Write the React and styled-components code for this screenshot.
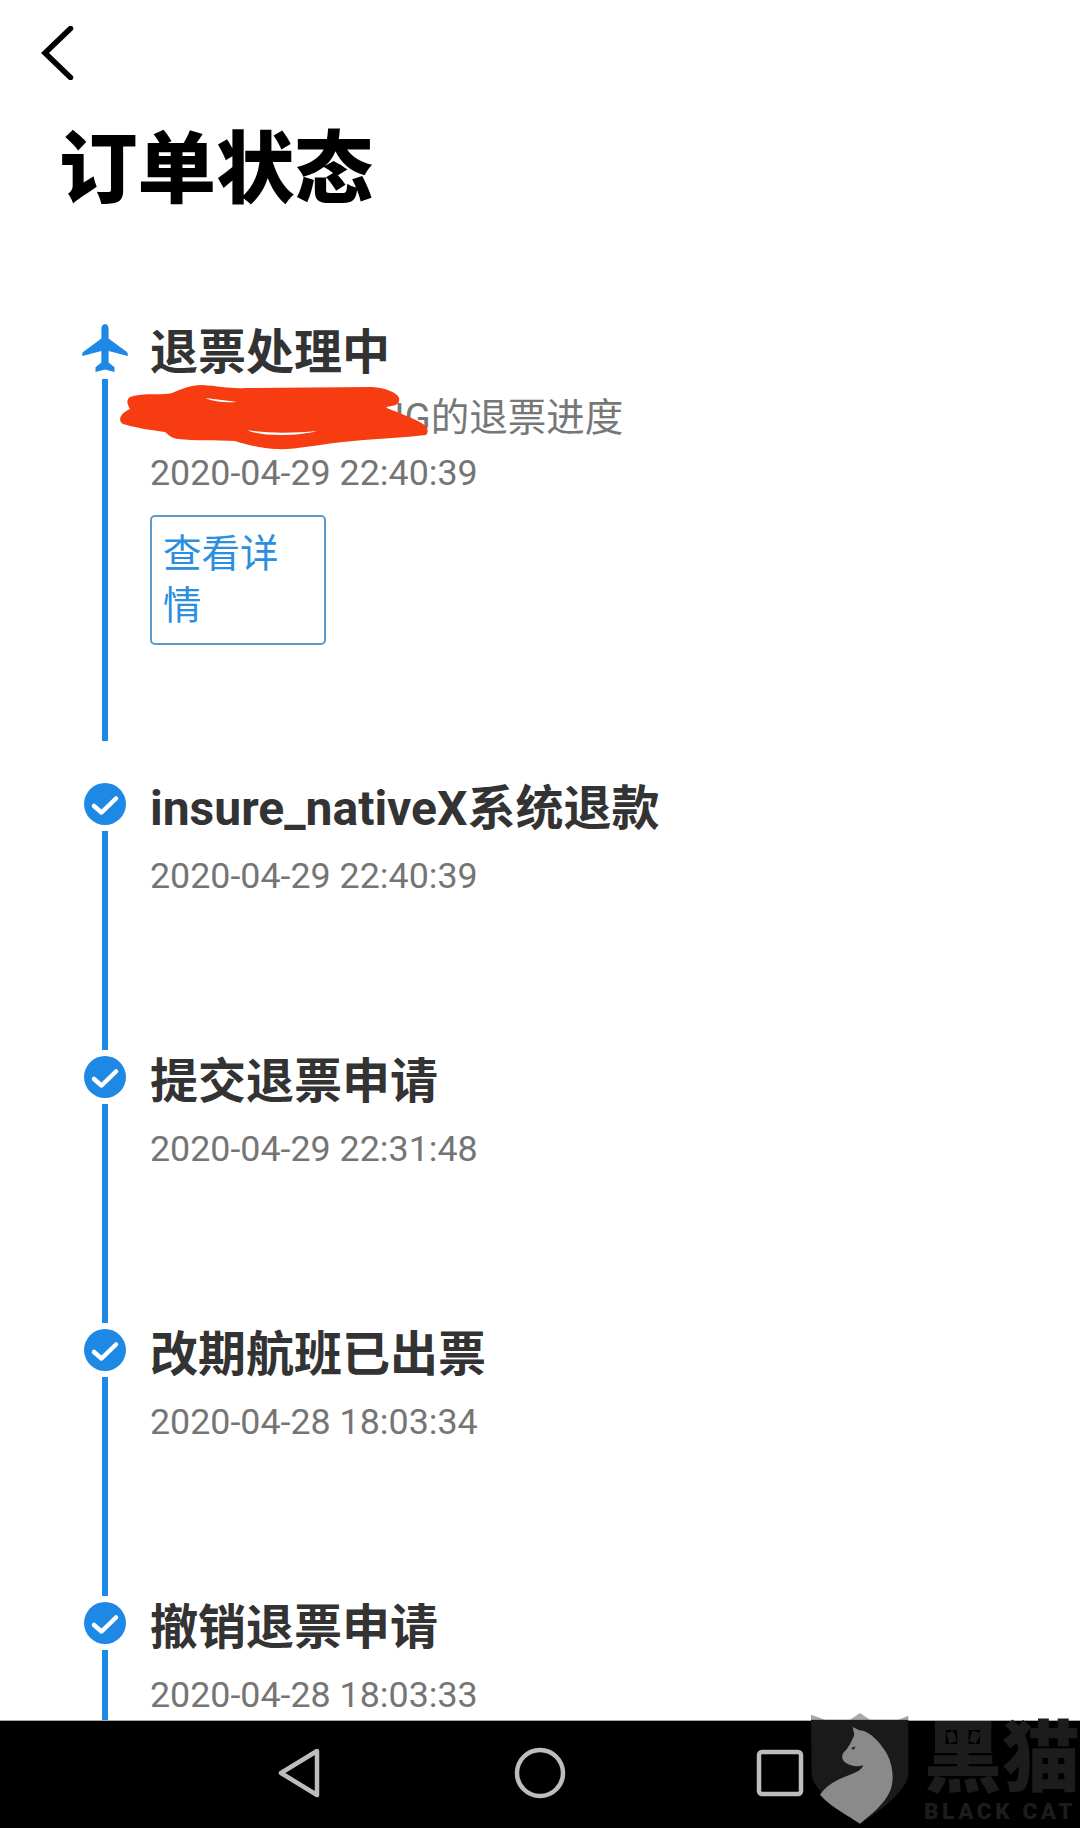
import React from "react";
import styled, { createGlobalStyle } from "styled-components";

const GlobalStyle = createGlobalStyle`
  html, body {
    margin: 0;
    background: #fff;
  }
  * {
    box-sizing: border-box;
  }
`;

const Page = styled.div`
  display: flex;
  flex-direction: column;
  width: 1080px;
  height: 1828px;
  overflow: hidden;
  font-family: Roboto, "Noto Sans CJK SC", sans-serif;
`;

const Content = styled.div`
  flex: 1;
  min-height: 0;
  overflow: hidden;
  padding-top: 26px;
`;

const BackIcon = styled.svg`
  display: block;
  width: 34px;
  height: 54px;
  margin-left: 41px;
`;

const Title = styled.h1`
  margin: 38px 0 0 59px;
  font-size: 78.5px;
  line-height: 104px;
  font-weight: 900;
  color: #000;
`;

const Timeline = styled.div`
  margin-top: 102px;
  padding-left: 75px;
`;

const Item = styled.div`
  display: flex;
  gap: 15px;
  height: ${(p) => p.$height}px;
`;

const Rail = styled.div`
  display: flex;
  flex-direction: column;
  align-items: center;
  flex: none;
  width: 60px;
  padding-bottom: ${(p) => p.$gap}px;
`;

const Line = styled.div`
  flex: 1;
  width: 6px;
  margin-top: 6px;
  background: #1e88e5;
`;

const Plane = styled.svg`
  display: block;
  flex: none;
  width: 46px;
  height: 49px;
`;

const Check = styled.svg`
  display: block;
  flex: none;
  width: 42px;
  height: 42px;
`;

const Body = styled.div`
  flex: 1;
  min-width: 0;
`;

const Heading = styled.div`
  margin-top: ${(p) => p.$top}px;
  font-size: 48px;
  line-height: 54px;
  font-weight: 700;
  color: #333;
`;

const NoteRow = styled.div`
  position: relative;
  height: 54px;
  margin-top: 11px;
  padding-left: 227px;
  font-size: 38.5px;
  line-height: 54px;
  color: #777;
`;

const Scribble = styled.svg`
  position: absolute;
  left: -40px;
  top: -17px;
  width: 340px;
  height: 85px;
`;

const Time = styled.div`
  margin-top: ${(p) => p.$top}px;
  font-size: 35.8px;
  line-height: 42px;
  color: #757575;
`;

const DetailButton = styled.div`
  width: 176px;
  height: 130px;
  margin-top: 21px;
  padding: 11px 11px;
  border: 2px solid #5b9bc9;
  border-radius: 5px;
  font-size: 38.5px;
  line-height: 52px;
  color: #2b8fe0;
`;

const NavBar = styled.div`
  position: relative;
  display: flex;
  justify-content: center;
  align-items: center;
  flex: none;
  height: 108px;
  padding-bottom: 3px;
  background: #000;
  border-top: 1px solid #aaa;
`;

const NavCell = styled.div`
  display: flex;
  justify-content: center;
  width: 240px;
`;

const NavIcon = styled.svg`
  display: block;
  width: 56px;
  height: 54px;
`;

const Watermark = styled.div`
  position: absolute;
  right: 0;
  bottom: 0;
  display: flex;
  align-items: flex-end;
  gap: 14px;
`;

const Shield = styled.svg`
  display: block;
  width: 100px;
  height: 112px;
  margin-bottom: 3px;
`;

const MarkText = styled.div`
  display: flex;
  flex-direction: column;
  width: 156px;
  margin-bottom: 5px;
  color: #1c1c1c;
  font-weight: 900;
`;

const MarkName = styled.div`
  font-size: 78px;
  line-height: 78px;
  white-space: nowrap;
`;

const MarkSub = styled.div`
  font-size: 22.5px;
  line-height: 24px;
  letter-spacing: 3.6px;
  white-space: nowrap;
`;

const steps = [
  { title: "insure_nativeX系统退款", time: "2020-04-29 22:40:39" },
  { title: "提交退票申请", time: "2020-04-29 22:31:48" },
  { title: "改期航班已出票", time: "2020-04-28 18:03:34" },
  { title: "撤销退票申请", time: "2020-04-28 18:03:33" },
];

function CheckIcon() {
  return (
    <Check viewBox="0 0 42 42">
      <circle cx="21" cy="21" r="21" fill="#1e88e5" />
      <path d="M10 23l7.5 6.5L32 15.5" fill="none" stroke="#fff" strokeWidth="4.5" strokeLinecap="round" strokeLinejoin="round" />
    </Check>
  );
}

function PlaneIcon() {
  return (
    <Plane viewBox="0 0 46 49">
      <path
        fill="#1e88e5"
        d="M23 0c2.4 0 3.6 2.4 3.6 5v9.5l17.6 13c1.600 1.200 2 2.800 1.400 4.500L26.600 27v11.500l5.900 4.800V48L23 45.500 13.500 48v-4.700l5.900-4.800V27L.4 32c-.6-1.700-.2-3.300 1.400-4.500l17.600-13V5c0-2.600 1.200-5 3.600-5z"
      />
    </Plane>
  );
}

function RedScribble() {
  return (
    <Scribble viewBox="0 0 340 85">
      <path
        fill="#f63c10"
        d="M20 23C35 18 50 22 62 19C72 15 80 11 92 11C110 12 120 15 135 14L262 13C275 14 287 18 289 24C290 29 288 32 274 33C290 39 305 45 313 50C318 53 319 58 316 61C290 64 260 65 233 68C205 71 185 76 165 75C148 74 135 70 125 67C105 66 85 67 68 65C60 64 58 60 55 58C40 56 22 53 13 50C8 47 9 40 20 35C17 30 16 26 20 23Z"
      />
      <path fill="#fff" d="M95 24C106 25 118 27 127 28C116 29 104 28 95 24Z" />
      <path fill="#fff" d="M137 56C160 60 185 59 207 57C190 62 150 63 137 56Z" />
    </Scribble>
  );
}

export default function App() {
  return (
    <Page>
      <GlobalStyle />
      <Content>
        <BackIcon viewBox="0 0 34 54">
          <path d="M29.500 2.500L4 27l25.500 24.500" fill="none" stroke="#000" strokeWidth="5.500" strokeLinecap="round" strokeLinejoin="miter" />
        </BackIcon>
        <Title>订单状态</Title>
        <Timeline>
          <Item $height={459}>
            <Rail $gap={42}>
              <PlaneIcon />
              <Line />
            </Rail>
            <Body>
              <Heading $top={2}>退票处理中</Heading>
              <NoteRow>
                NG的退票进度
                <RedScribble />
              </NoteRow>
              <Time $top={7}>2020-04-29 22:40:39</Time>
              <DetailButton>查看详情</DetailButton>
            </Body>
          </Item>
          {steps.map((step) => (
            <Item key={step.title} $height={273}>
              <Rail $gap={6}>
                <CheckIcon />
                <Line />
              </Rail>
              <Body>
                <Heading $top={-1}>{step.title}</Heading>
                <Time $top={19}>{step.time}</Time>
              </Body>
            </Item>
          ))}
        </Timeline>
      </Content>
      <NavBar>
        <NavCell>
          <NavIcon viewBox="0 0 56 54">
            <path d="M45 5L9 27l36 22z" fill="none" stroke="#bdbdbd" strokeWidth="4.500" strokeLinejoin="round" />
          </NavIcon>
        </NavCell>
        <NavCell>
          <NavIcon viewBox="0 0 56 54">
            <circle cx="28" cy="27" r="23" fill="none" stroke="#bdbdbd" strokeWidth="4.500" />
          </NavIcon>
        </NavCell>
        <NavCell>
          <NavIcon viewBox="0 0 56 54">
            <rect x="7" y="6" width="42" height="42" rx="3" fill="none" stroke="#bdbdbd" strokeWidth="4.500" />
          </NavIcon>
        </NavCell>
        <Watermark>
          <Shield viewBox="30 40 300 336">
            <path fill="#a8a8a8" d="M33 45L75 60H33zM150 60L180 40L210 60zM325 48L295 60H325z" />
            <path fill="#1a1a1a" d="M33 60H325V225C322 262 262 322 180 372C98 322 38 262 35 225z" />
            <path
              fill="#8a8a8a"
              d="M158 82L178 92C205 92 240 125 262 165C280 200 283 245 270 275C255 310 215 345 180 372C140 345 90 320 60 285C80 255 115 238 150 225C170 218 185 210 190 197C170 203 148 198 133 186C124 178 125 165 132 157C145 145 155 125 163 105z"
            />
            <path fill="#1a1a1a" d="M153 146L166 140L162 150z" />
          </Shield>
          <MarkText>
            <MarkName>黑猫</MarkName>
            <MarkSub>BLACK CAT</MarkSub>
          </MarkText>
        </Watermark>
      </NavBar>
    </Page>
  );
}
